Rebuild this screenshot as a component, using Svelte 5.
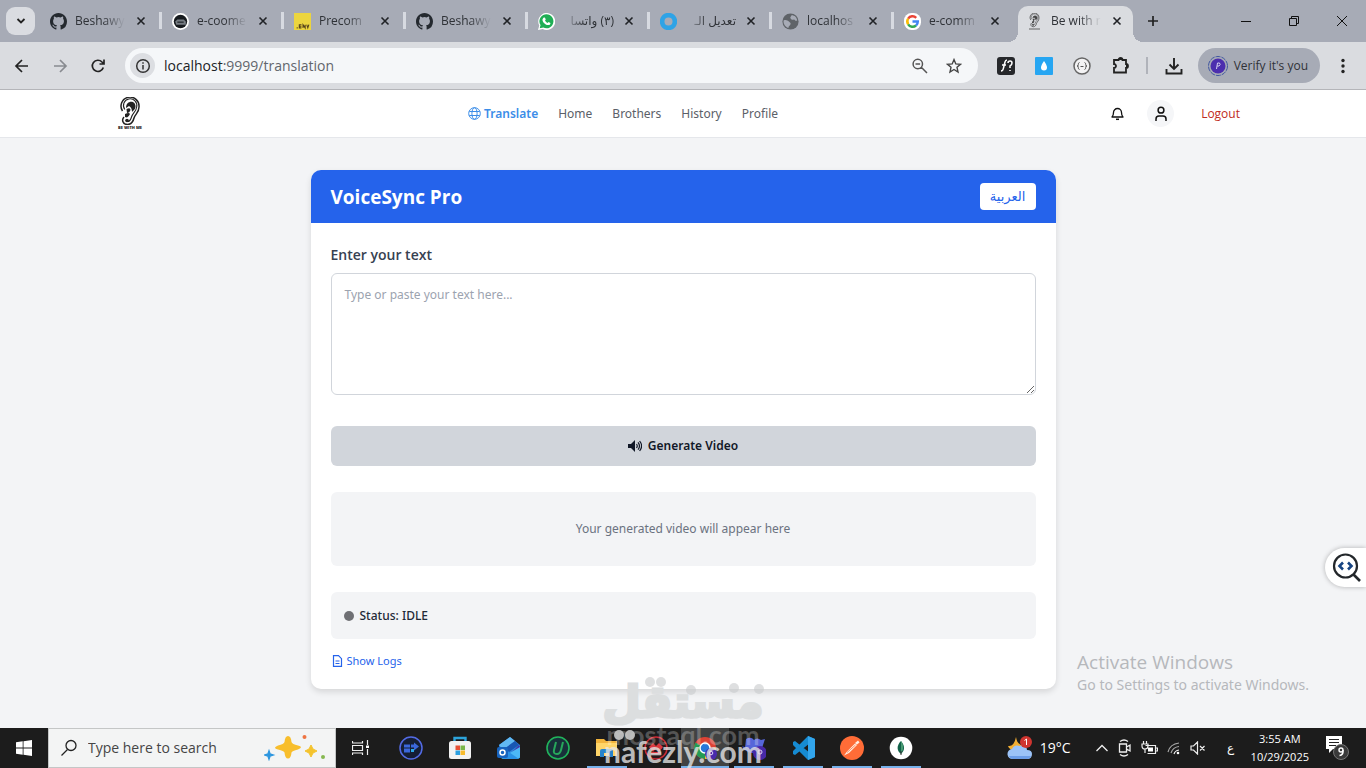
<script>
  const tabs = [
    { icon: 'github', title: 'Beshawy' },
    { icon: 'store', title: 'e-coome' },
    { icon: 'env', title: 'Precom' },
    { icon: 'github', title: 'Beshawy' },
    { icon: 'whatsapp', title: '(٣) واتسا', rtl: true },
    { icon: 'ring', title: 'تعديل الـ', rtl: true },
    { icon: 'globe', title: 'localhos' },
    { icon: 'google', title: 'e-comm' },
    { icon: 'ear', title: 'Be with r', active: true },
  ];
  const links = ['Home', 'Brothers', 'History', 'Profile'];
  const apps = [
    { name: 'devhome' }, { name: 'msstore' }, { name: 'outlook' }, { name: 'iobit' },
    { name: 'explorer', open: true }, { name: 'anydesk' }, { name: 'chrome', open: true, focused: true },
    { name: 'teams', open: true }, { name: 'vscode', open: true }, { name: 'postman', open: true },
    { name: 'mongo', open: true },
  ];
  let text = $state('');
</script>

{#snippet ear()}
  <path d="M2.500 14A9 9 0 1 1 19 10c0 6-4 7-5 11s-3 6.500-6.500 6.500c-5 0-6-5-3.500-7.500" fill="none" stroke="#222" stroke-width="1.500" />
  <path d="M4.800 12.500A6.700 6.700 0 1 1 16.700 10c-.5 4.500-4 6-5.200 10-.8 3-2.500 4.800-4.500 4.500" fill="none" stroke="#222" stroke-width="1.100" />
  <path d="M6 11c0-8 10-8 9.500-1-.5 3-3 4-3.500 5 0-3-1-5-3-6-1 1-2 1-3 2z" fill="#222" />
  <path d="M6.500 12q4-2 4 1-1 3-3.500 3zM5 17q4-2 5 0-1 2-3 3.500L5 20z" fill="#222" />
  <circle cx="7" cy="23.500" r="1.800" fill="#222" />
{/snippet}

{#snippet favicon(name)}
  {#if name === 'github'}
    <svg class="fav" viewBox="0 0 16 16"><path fill="#24292f" d="M8 0C3.58 0 0 3.58 0 8c0 3.54 2.29 6.53 5.47 7.59.4.07.55-.17.55-.38 0-.19-.01-.82-.01-1.49-2.01.37-2.53-.49-2.69-.94-.09-.23-.48-.94-.82-1.13-.28-.15-.68-.52-.01-.53.63-.01 1.08.58 1.23.82.72 1.21 1.87.87 2.33.66.07-.52.28-.87.51-1.07-1.78-.2-3.64-.89-3.64-3.95 0-.87.31-1.59.82-2.15-.08-.2-.36-1.02.08-2.12 0 0 .67-.21 2.2.82a7.6 7.6 0 0 1 4 0c1.53-1.04 2.2-.82 2.2-.82.44 1.1.16 1.92.08 2.12.51.56.82 1.27.82 2.15 0 3.07-1.87 3.75-3.65 3.95.29.25.54.73.54 1.48 0 1.07-.01 1.93-.01 2.2 0 .21.15.46.55.38A8.01 8.01 0 0 0 16 8c0-4.42-3.58-8-8-8z" /></svg>
  {:else if name === 'store'}
    <svg class="fav" viewBox="0 0 16 16"><circle cx="8" cy="8" r="8" fill="#fff" /><circle cx="8" cy="8" r="6.300" fill="#161a1e" /><path d="M3 8l2-2h6l2 2v3H4z" fill="#777d84" /><path d="M5 8.600h6" stroke="#161a1e" /></svg>
  {:else if name === 'env'}
    <svg class="fav" viewBox="0 0 16 16"><rect width="16" height="16" fill="#ecd53f" /><path d="M2.500 14h1M7 11H5v3h2M5 12.500h2M8.500 14v-3l2 3v-3M12 11l1 3 1-3" fill="none" stroke="#55421b" /></svg>
  {:else if name === 'whatsapp'}
    <svg class="fav" viewBox="0 0 16 16"><path d="M0 16l1.200-4.200A8 8 0 1 1 4.400 15z" fill="#fff" /><path d="M1.600 14.400l.8-3A6.600 6.600 0 1 1 5 13.700z" fill="#1fae55" /><path d="M5 4.500l1.500-.2.8 1.900-.7.9c.6 1.100 1.300 1.700 2.400 2.200l.9-.9 1.800.9c0 1.700-1.200 2.100-2.200 2C6.500 11 4 8 4.200 6z" fill="#fff" /></svg>
  {:else if name === 'ring'}
    <svg class="fav" viewBox="0 0 16 16"><circle cx="8" cy="8" r="6" fill="none" stroke="#2ea3e6" stroke-width="4.400" /></svg>
  {:else if name === 'globe'}
    <svg class="fav" viewBox="0 0 16 16"><circle cx="8" cy="8" r="7.600" fill="#5f6368" /><path d="M1.500 7c2-1 4 0 5 1 1 1 2 1 1.500 2.500S6 12 6 14C3 13 1 10 1.500 7zM9 2c3 0 5 2 5.300 5-2 1-2-1-3-1s-2 1-3-.5S8 4 9 2z" fill="#a7abb6" /></svg>
  {:else if name === 'google'}
    <svg class="fav" viewBox="0 0 16 16"><rect width="16" height="16" rx="7" fill="#fff" /><g fill="none" stroke-width="2.300"><path d="M3.900 5.300A5 5 0 0 1 11.500 4.500" stroke="#ea4335" /><path d="M3.900 10.700a5 5 0 0 1 0-5.400" stroke="#fbbc05" /><path d="M11.300 11.800a5 5 0 0 1-7.400-1.100" stroke="#34a853" /><path d="M8 8h5a5 5 0 0 1-1.700 3.800" stroke="#4285f4" /></g></svg>
  {:else}
    <svg class="fav" viewBox="-1 0 22 34" opacity=".8">{@render ear()}<path d="M-1 32h22" stroke="#444" stroke-width="2" /></svg>
  {/if}
{/snippet}

{#snippet appicon(name)}
  <svg width="24" height="24" viewBox="0 0 24 24">
    {#if name === 'devhome'}
      <circle cx="12" cy="12" r="11" fill="#151e35" stroke="#536be5" stroke-width="1.500" /><path d="M5 8.500h6v3H5zM12 8.500h3v-2l5 4-5 4v-3h-3zM5 12.500h6v4H5z" fill="#3b67dc" /><path d="M12 13h3v3h-3z" fill="#2aa8e8" />
    {:else if name === 'msstore'}
      <path d="M6.500 6V2h11v4" fill="none" stroke="#2ca4dc" stroke-width="2.400" /><rect x="1" y="5" width="22" height="18" rx="2.500" fill="#f2f2f2" /><path d="M7.500 9.500h4.500v4.500H7.500z" fill="#e75035" /><path d="M12.500 9.500H17v4.500h-4.500z" fill="#7ab648" /><path d="M7.500 14.500h4.500V19H7.500z" fill="#2a9fe0" /><path d="M12.500 14.500H17V19h-4.500z" fill="#f8bc2e" />
    {:else if name === 'outlook'}
      <path d="M2 9L13 1l10 8v13H4z" fill="#2f86dc" /><path d="M2 9l11-8 5 4-12 9z" fill="#61b9f3" /><path d="M7 13l11-8 4 4-10 7z" fill="#1857b3" /><path d="M22 9l1 2v8H12z" fill="#4338a8" /><path d="M4 22l19-11v9q0 3-3 3H6z" fill="#4cb8f6" /><path d="M9 14l13 9H6z" fill="#2a92e6" /><rect y="11" width="11" height="11" rx="2" fill="#1764bf" /><circle cx="5.500" cy="16.500" r="2.500" fill="none" stroke="#fff" stroke-width="1.500" />
    {:else if name === 'iobit'}
      <circle cx="12" cy="12" r="11" fill="#18303a" stroke="#21b45c" stroke-width="1.600" /><path d="M10 6L8 14q-1 4 3 4 3 0 4-4l2-8" fill="none" stroke="#27a75b" stroke-width="2" />
    {:else if name === 'explorer'}
      <path d="M1 3h8l2 2h11v15H1z" fill="#f2b43c" /><path d="M1 7h21v13H1z" fill="#ffd568" /><path d="M5 21v-6q0-2 2-2h9q2 0 2 2v6h-4v-4H9v4z" fill="#2683cb" />
    {:else if name === 'anydesk'}
      <circle cx="12" cy="12" r="11" fill="#29191b" stroke="#c92c35" stroke-width="1.500" /><path d="M5 11l4-4 4 4-4 5zM11 11l4-4 4 4-4 5z" fill="#da3941" /><path d="M7 17h10" stroke="#da3941" stroke-width="2" />
    {:else if name === 'chrome'}
      <circle cx="12" cy="12" r="11" fill="#dd4335" /><path d="M12 12L2.500 6.500A11 11 0 0 0 12 23z" fill="#239b55" /><path d="M12 12h11A11 11 0 0 1 12 23z" fill="#f4c431" /><circle cx="12" cy="12" r="5" fill="#2878da" stroke="#fff" stroke-width="1.500" /><circle cx="18" cy="18" r="6" fill="#4a2bac" /><circle cx="18" cy="17" r="1.800" fill="none" stroke="#dad3f5" />
    {:else if name === 'teams'}
      <path d="M4 3q5-3 8 1 3-3 7 0l4-1-2 6q-1 6-7 8-8 1-11-5z" fill="#5666d9" /><path d="M0 10q11 5 20 1l-4 6q-13 1-16-7z" fill="#303bb3" /><circle cx="18" cy="17" r="7" fill="#4829a6" /><circle cx="18" cy="16" r="2" fill="none" stroke="#dad3f5" />
    {:else if name === 'vscode'}
      <path d="M17 0l7 3v18l-7 3L2 9V6l2-1 15 12V7L4 19l-2-1v-3z" fill="#168bd2" /><path d="M17 0l7 3v18l-7 3z" fill="#32a5ec" />
    {:else if name === 'postman'}
      <circle cx="12" cy="12" r="12" fill="#ff6c37" /><path d="M4 19.500l3-4 8-8 2 1.500-8 8zM15 7l3-2.500 1.500 2L17 8.500z" fill="#fff0e4" /><path d="M7 16.500L15.500 9" stroke="#ff8a5e" />
    {:else}
      <circle cx="12" cy="12" r="11.300" fill="#fff" /><path d="M12 5c5 6 3 10 0 13-4-3-5-8 0-13z" fill="#116149" /><path d="M12 5c4 6 2 9 0 12z" fill="#499a72" /><path d="M12 15v4" stroke="#333" />
    {/if}
  </svg>
{/snippet}

<div class="screen">
  <div class="tabstrip">
    <button class="tabsearch" aria-label="Search tabs"><svg width="12" height="12" viewBox="0 0 12 12"><path d="M2.500 4L6 7.500 9.500 4" fill="none" stroke="#222" stroke-width="1.800" /></svg></button>
    <div class="tabs">
      {#each tabs as t}
        <div class="tab" class:active={t.active}>
          {@render favicon(t.icon)}
          <span class="title" class:rtl={t.rtl} dir={t.rtl ? 'rtl' : 'ltr'}>{t.title}</span>
          <button class="close" aria-label="Close tab"><svg width="10" height="10" viewBox="0 0 10 10"><path d="M1.500 1.500l7 7m0-7l-7 7" stroke="#202226" stroke-width="1.600" /></svg></button>
        </div>
      {/each}
    </div>
    <button class="new" aria-label="New tab"><svg width="12" height="12" viewBox="0 0 12 12"><path d="M6 1v10M1 6h10" stroke="#222" stroke-width="1.700" /></svg></button>
    <div class="wincontrols">
      <button aria-label="Minimize"><svg width="12" height="12"><path d="M1 6.500h10" stroke="#111" /></svg></button>
      <button aria-label="Restore"><svg width="12" height="12"><path d="M1.500 3.500h7v7h-7zM3.500 3v-1.500h7v7H9" fill="none" stroke="#111" /></svg></button>
      <button aria-label="Close"><svg width="12" height="12"><path d="M1 1l10 10M11 1L1 11" stroke="#111" /></svg></button>
    </div>
  </div>

  <div class="toolbar">
    <button aria-label="Back"><svg width="16" height="16" viewBox="0 0 16 16"><path d="M14 8H2.500M8 2L2 8l6 6" class="dark" /></svg></button>
    <button aria-label="Forward"><svg width="16" height="16" viewBox="0 0 16 16"><path d="M2 8h11.500M8 2l6 6-6 6" class="dim" /></svg></button>
    <button aria-label="Reload"><svg width="16" height="16" viewBox="0 0 16 16"><path d="M13.300 9.500A5.600 5.600 0 1 1 12 4l2 2M14 1.500V6H9.500" class="dark" /></svg></button>
    <div class="omnibox">
      <button class="info" aria-label="Site information"><svg width="16" height="16" viewBox="0 0 16 16"><circle cx="8" cy="8" r="6.300" fill="none" stroke="#333" stroke-width="1.500" /><path d="M8 7v4.500M8 4.200v1.600" stroke="#333" stroke-width="1.500" /></svg></button>
      <span class="url">localhost<i>:9999/translation</i></span>
      <button aria-label="Zoom"><svg width="16" height="16" viewBox="0 0 16 16"><path d="M10.500 6a4.700 4.700 0 1 1-9.400 0 4.700 4.700 0 0 1 9.400 0zM9.300 9.300L15 15M3.500 6h4.600" fill="none" stroke="#555" stroke-width="1.500" /></svg></button>
      <button aria-label="Bookmark"><svg width="16" height="16" viewBox="0 0 16 16"><path d="M8 1.600l1.800 4.300 4.700.4-3.500 3 1 4.700-4-2.500L4 14l1-4.700-3.500-3 4.700-.4z" fill="none" stroke="#444" stroke-width="1.400" /></svg></button>
    </div>
    <div class="extensions">
      <button aria-label="Font finder"><svg width="18" height="18" viewBox="0 0 18 18"><rect width="18" height="18" rx="3" fill="#26282b" /><path d="M4 14q2 0 2.500-3L8 5q.5-2 2-2M5 8h4M11 6q0-2 2-2t2 2-2 3v2m0 2v1" fill="none" stroke="#fff" stroke-width="1.500" /></svg></button>
      <button aria-label="Color drop"><svg width="18" height="18" viewBox="0 0 18 18"><rect width="18" height="18" rx="1" fill="#26a6f2" /><path d="M9 4q3 4 3 6.500a3 3 0 0 1-6 0Q6 8 9 4z" fill="#fff" /></svg></button>
      <button aria-label="JSON viewer"><svg width="18" height="18" viewBox="0 0 18 18"><circle cx="9" cy="9" r="8" fill="#f3f3f4" stroke="#666" stroke-width="1.500" /><path d="M6.500 5.500Q5 6 5.300 7.500T4 9q1.600 0 1.300 1.500t1.200 2M11.500 5.500Q13 6 12.700 7.500T14 9q-1.600 0-1.300 1.500t-1.200 2M7.500 9.500h3" fill="none" stroke="#555" /></svg></button>
      <button aria-label="Extensions"><svg width="20" height="20" viewBox="0 0 20 20"><path d="M3 4h4.500a2 2 0 0 1 4 0H15v4a2 2 0 0 1 0 4v4.500H3V12a2 2 0 0 0 0-4z" fill="none" stroke="#222" stroke-width="1.800" /><path d="M7.500 4a2 2 0 0 1 4 0zM15 8a2 2 0 0 1 0 4z" fill="#222" /></svg></button>
    </div>
    <span class="divider"></span>
    <button aria-label="Downloads"><svg width="18" height="18" viewBox="0 0 18 18"><path d="M9 1v11M4.500 7.500L9 12l4.500-4.500M1.500 12v4.500h15V12" fill="none" stroke="#222" stroke-width="1.900" /></svg></button>
    <button class="verify"><svg width="22" height="22" viewBox="0 0 22 22"><circle cx="11" cy="11" r="9.500" fill="none" stroke="#4056a0" stroke-dasharray="5 1" /><circle cx="11" cy="11" r="7.500" fill="#4c2eae" /><path d="M9.500 14l1-6h2q1.500 1.500-.5 3h-2" fill="none" stroke="#d4cef0" /></svg><span>Verify it's you</span></button>
    <button aria-label="Menu"><svg width="6" height="16" viewBox="0 0 6 16"><g fill="#222"><circle cx="3" cy="2.500" r="1.700" /><circle cx="3" cy="8" r="1.700" /><circle cx="3" cy="13.500" r="1.700" /></g></svg></button>
  </div>

  <header class="site">
    <a href="#home" class="logo" aria-label="Be with me"><svg width="20" height="28" viewBox="0 0 20 28">{@render ear()}</svg><span>BE WITH ME</span></a>
    <nav>
      <a href="#translate" class="current"><svg width="13" height="13" viewBox="0 0 13 13"><g fill="none" stroke="#3b8de8"><circle cx="6.500" cy="6.500" r="5.800" /><ellipse cx="6.500" cy="6.500" rx="2.600" ry="5.800" /><path d="M1.300 4.500h10.400M1.300 8.500h10.400" /></g></svg>Translate</a>
      {#each links as l}<a href="#{l}">{l}</a>{/each}
    </nav>
    <div class="account">
      <button class="round" aria-label="Notifications"><svg width="13" height="14" viewBox="0 0 13 14"><path d="M1 10q1.500-1.500 1.500-4.500a4 4 0 0 1 8 0Q10.500 8.500 12 10z" fill="none" stroke="#111" stroke-width="1.300" stroke-linejoin="round" /><path d="M5 12.300h3" stroke="#111" stroke-width="1.500" /></svg></button>
      <button class="round user" aria-label="Account"><svg width="14" height="16" viewBox="0 0 14 16"><circle cx="7" cy="4.200" r="2.900" fill="none" stroke="#111" stroke-width="1.500" /><path d="M2 15v-2q0-3 3-3h4q3 0 3 3v2" fill="none" stroke="#111" stroke-width="1.500" /></svg></button>
      <button class="logout">Logout</button>
    </div>
  </header>

  <main>
    <section class="card">
      <div class="cardhead"><h1>VoiceSync Pro</h1><button lang="ar">العربية</button></div>
      <div class="cardbody">
        <label for="source">Enter your text</label>
        <textarea id="source" placeholder="Type or paste your text here..." bind:value={text}></textarea>
        <button class="generate"><svg width="14" height="12" viewBox="0 0 14 12"><path d="M0 4h3l4-4v12L3 8H0z" fill="#111827" /><path d="M8.500 4q1.500 2 0 4M10 2.300q3 3.700 0 7.400M11.600 1q4 5 0 10" fill="none" stroke="#111827" stroke-width="1.200" /></svg>Generate Video</button>
        <div class="preview">Your generated video will appear here</div>
        <div class="status"><span class="dot"></span>Status: IDLE</div>
        <button class="logs"><svg width="11" height="12" viewBox="0 0 11 12"><path d="M1.500.7H6.500L9.500 3.700v7.600h-8zM3.500 6h4M3.500 8.500h4" fill="none" stroke="#2563eb" stroke-width="1.200" /></svg>Show Logs</button>
      </div>
    </section>
    <div class="activate"><strong>Activate Windows</strong><span>Go to Settings to activate Windows.</span></div>
    <button class="inspect" aria-label="Inspect code"><svg width="30" height="30" viewBox="0 0 30 30"><circle cx="13.500" cy="13" r="11.500" fill="none" stroke="#23272b" stroke-width="2.200" /><path d="M21.500 21.500l6.500 6.500" stroke="#23272b" stroke-width="2.600" /><path d="M11 9.500l-3.500 3.500 3.500 3.500M16 9.500l3.500 3.500-3.500 3.500" fill="none" stroke="#174482" stroke-width="2.600" /></svg></button>
  </main>

  <footer>
    <button class="start" aria-label="Start"><svg width="16" height="16" viewBox="0 0 16 16"><path d="M0 2.300L6.700 1.300v6.300H0zM7.500 1.200L16 0v7.600H7.500zM0 8.400h6.700v6.300L0 13.700zM7.500 8.400H16V16l-8.500-1.200z" fill="#fff" /></svg></button>
    <label class="search">
      <svg width="18" height="18" viewBox="0 0 18 18"><circle cx="11" cy="6.500" r="5" fill="none" stroke="#222" stroke-width="1.300" /><path d="M7.500 10.500L1.500 16.500" stroke="#222" stroke-width="1.300" /></svg>
      <input aria-label="Search" placeholder="Type here to search" />
      <svg width="62" height="26" viewBox="0 0 62 26"><path d="M24 1q3 0 3.500 6 .5 2 6.500 3.500t0 4q-6 1.500-6.500 3-.5 6-3.500 6t-3.500-6q-.5-1.500-6.500-3t0-4q6-1.500 6.500-3.500.5-6 3.500-6z" fill="#f8be2c" /><path d="M47 10l2 4 4 2-4 2-2 4-2-4-4-2 4-2z" fill="#f4c32e" stroke="#f4c32e" /><path d="M5 16l1 3 3 1-3 1-1 3-1-3-3-1 3-1z" fill="#2d96df" stroke="#2d96df" stroke-width="1.500" /><circle cx="40.500" cy="2" r="2" fill="#ee7442" /><circle cx="59" cy="22" r="2" fill="#86b750" /></svg>
    </label>
    <button class="taskview" aria-label="Task view"><svg width="17" height="16" viewBox="0 0 17 16"><path d="M.5 1v2h10V1M.5 15v-2h10v2M.5 5.500h10v5H.5zM15.500 0v5M15.500 9v6" fill="none" stroke="#eee" stroke-width="1.200" /><path d="M14 5.500h3v2.500h-3z" fill="#fff" /></svg></button>
    <div class="apps">
      {#each apps as a}<button class:open={a.open} class:focused={a.focused} aria-label={a.name}>{@render appicon(a.name)}</button>{/each}
    </div>
    <div class="tray">
      <svg width="26" height="24" viewBox="0 0 26 24"><path d="M9 1q1 8 8 9-2 5-8 5-7-1-8-5 6 1 8-9z" fill="#f2ae31" /><path d="M6 23a5 5 0 0 1-1-10q2-5 8-3 2-2 5 0 2 1 2 4 5 0 5 4 0 5-5 5z" fill="#9cc3f7" /><path d="M2 20h22q-1 3-4 3H6q-3 0-4-3z" fill="#6d9ee8" /><circle cx="19" cy="6" r="6" fill="#cf3530" /><path d="M17.500 4.500L19.500 3v6" fill="none" stroke="#fff" /></svg>
      <span class="temp">19°C</span>
      <svg class="up" width="14" height="10" viewBox="0 0 14 10"><path d="M1.500 8L7 2.500 12.500 8" fill="none" stroke="#eee" stroke-width="1.300" /></svg>
      <svg width="14" height="18" viewBox="0 0 14 18"><path d="M1.500 5h7v8h-7zM8.500 8L12 6v6l-3.500-2M2 2.500q4-3 8 0M2 15.500q4 3 8 0" fill="none" stroke="#eee" stroke-width="1.300" /></svg>
      <svg width="17" height="14" viewBox="0 0 17 14"><path d="M4.500 4.500h10v8h-8M15 7h1.500v3H15M1 3h6v2q0 3-3 3T1 5zM2.500 0v3M5.500 0v3M4 8v4" fill="none" stroke="#eee" stroke-width="1.200" /><path d="M7 6.500h5v4H7z" fill="#fff" /></svg>
      <svg width="14" height="14" viewBox="0 0 14 14"><g fill="none" stroke="#aaa" stroke-width="1.200"><path d="M1 11Q3 3 12 2" /><path d="M4 12q2-6 8-6.500" /><path d="M7 13q1-3.500 5-4" stroke="#eee" /></g><circle cx="11" cy="12" r="1.300" fill="#fff" /></svg>
      <svg width="16" height="14" viewBox="0 0 16 14"><path d="M1 5h2.500l4-4v12l-4-4H1zM10 5l4.500 4.500M14.500 5L10 9.500" fill="none" stroke="#eee" stroke-width="1.200" /></svg>
      <span class="lang">ع</span>
      <span class="clock">3:55 AM<br />10/29/2025</span>
      <svg class="note" width="26" height="26" viewBox="0 0 26 26"><path d="M1 1h16v13H8l-4 4v-4H1z" fill="#fff" /><path d="M4 4.500h10M4 7.500h10M4 10.500h7" stroke="#222" /><circle cx="16" cy="17" r="7.500" fill="#3a3a3a" stroke="#777" /><circle cx="16" cy="15" r="2" fill="none" stroke="#fff" stroke-width="1.400" /><path d="M18 15q.5 5-3.500 5.500" fill="none" stroke="#fff" stroke-width="1.400" /></svg>
    </div>
  </footer>

  <div class="watermark" aria-hidden="true">
    <svg width="166" height="92" viewBox="0 0 166 92"><g fill="#c9cbcd" opacity=".6"><circle cx="50" cy="6" r="5" /><circle cx="61" cy="6" r="5" /><circle cx="91" cy="14" r="5" /><circle cx="134" cy="12" r="5" /><circle cx="159" cy="13" r="5" /></g><g fill="#c9c9c9" opacity=".9"><circle cx="19" cy="59" r="5" /><circle cx="30" cy="59" r="5" /></g></svg>
    <b>مستقل</b><span>mostaql.com</span><em>nafezly.com</em>
  </div>
</div>

<style>
  :global(body) { margin: 0; }
  .screen { position: relative; min-height: 100vh; display: flex; flex-direction: column; overflow: hidden; background: #f3f4f6; color: #1f2937; font: 12px/18px "Noto Sans", "DejaVu Sans", sans-serif; }
  * { box-sizing: border-box; }
  button { border: 0; padding: 0; background: none; font: inherit; color: inherit; display: flex; align-items: center; justify-content: center; }
  a { text-decoration: none; color: inherit; }
  svg { flex: none; display: block; }
  .tabstrip, .toolbar, .tray { font-family: "Open Sans", "DejaVu Sans", sans-serif; }
  .tabstrip { height: 42px; background: #a7abb6; display: flex; align-items: center; padding-left: 6px; }
  .tabsearch { width: 29px; height: 28px; border-radius: 9px; background: #dadce1; }
  .tabs { display: flex; gap: 7px; margin-left: 7px; align-self: flex-end; }
  .tab { position: relative; width: 115px; height: 36px; padding: 0 9px 6px 8px; display: flex; align-items: center; gap: 8px; color: #2f3237; }
  .tab:not(:nth-last-child(-n+2))::after { content: ""; position: absolute; right: -5px; top: 6px; width: 3px; height: 17px; background: #d7dae1; }
  .fav { width: 17px; height: 17px; }
  .title { flex: 1; min-width: 0; overflow: hidden; white-space: nowrap; mask-image: linear-gradient(90deg, #000 55%, transparent 98%); }
  .title.rtl { mask-image: linear-gradient(270deg, #000 55%, transparent 98%); }
  .close { width: 14px; height: 14px; }
  .active { background: #dadce0; border-radius: 10px 10px 0 0; }
  .active::before { content: ""; position: absolute; left: -10px; right: -10px; bottom: 0; height: 10px; background: radial-gradient(circle at 0 0, transparent 10px, #dadce0 10px) left / 10px 10px no-repeat, radial-gradient(circle at 100% 0, transparent 10px, #dadce0 10px) right / 10px 10px no-repeat; }
  .new { width: 28px; height: 28px; margin-left: 6px; }
  .wincontrols { display: flex; margin-left: auto; }
  .wincontrols button { width: 48px; height: 40px; }
  .toolbar { height: 48px; display: flex; align-items: center; background: #dadce0; border-bottom: 1px solid #b4b5b9; padding: 0 20px 0 14px; gap: 22px; }
  .dark, .dim { fill: none; stroke: #222; stroke-width: 1.7; }
  .dim { stroke: #888b90; }
  .omnibox { flex: 1; height: 35px; border-radius: 18px; background: #f5f7f9; display: flex; align-items: center; gap: 18px; padding: 0 16px 0 5px; margin-left: -3px; }
  .info { width: 25px; height: 25px; border-radius: 50%; background: #dcdee2; }
  .url { flex: 1; font-size: 14px; line-height: 20px; margin-left: -9px; color: #202226; }
  .url i { font-style: normal; color: #62666d; }
  .extensions { display: flex; align-items: center; gap: 20px; margin-left: -3px; }
  .divider { width: 2px; height: 17px; background: #b0b3ba; margin: 0 -5px 0 -7px; }
  .verify { height: 35px; border-radius: 18px; background: #a7abb6; padding: 0 12px 0 9px; gap: 5px; color: #303238; margin: 0 -2px 0 -7px; }
  .site { height: 48px; background: #fff; border-bottom: 1px solid #e5e7eb; display: flex; align-items: center; justify-content: space-between; padding: 0 126px 0 118px; }
  .logo { display: flex; flex-direction: column; align-items: center; color: #222; }
  .logo span { font: 900 4px/5px "Open Sans", sans-serif; }
  nav { display: flex; gap: 20px; color: #5b6068; }
  nav a { display: flex; align-items: center; gap: 3px; }
  .current { color: #3b8de8; font-weight: 600; }
  .account { display: flex; align-items: center; gap: 16px; }
  .round { width: 27px; height: 27px; border-radius: 50%; }
  .user { background: #f5f6f8; }
  .logout { color: #bf2a20; margin-left: 11px; font-family: "Open Sans", sans-serif; font-weight: 500; }
  main { position: relative; flex: 1; padding: 32px 20px 39px; }
  .card { max-width: 745px; margin: 0 auto; border-radius: 10px; overflow: hidden; background: #fff; box-shadow: 0 3px 6px rgba(0, 0, 0, .12); }
  .cardhead { height: 53px; padding: 0 20px; display: flex; align-items: center; justify-content: space-between; background: #2563eb; color: #fff; }
  h1 { margin: 0; font: 700 19px/26px "Open Sans", sans-serif; }
  .cardhead button { width: 56px; height: 27px; border-radius: 4px; background: #fff; color: #2563eb; font: 13px/18px "DejaVu Sans", sans-serif; }
  .cardbody { padding: 22px 20px 19px; display: flex; flex-direction: column; }
  .cardbody label { font: 600 14px/20px "Open Sans", sans-serif; color: #374151; }
  textarea { display: block; height: 122px; margin: 8px 0 31px; border: 1px solid #d1d5db; border-radius: 6px; padding: 12px 13px; font: inherit; line-height: 18px; resize: vertical; outline: 0; }
  textarea::placeholder { color: #9ca3af; }
  .generate { height: 40px; gap: 6px; border-radius: 6px; background: #d1d5db; color: #111827; font-weight: 600; }
  .preview { margin-top: 26px; height: 74px; border-radius: 6px; background: #f3f4f6; color: #6b7280; display: flex; align-items: center; justify-content: center; }
  .status { margin-top: 26px; height: 47px; border-radius: 6px; background: #f3f4f6; display: flex; align-items: center; padding-left: 13px; gap: 6px; font-weight: 500; }
  .dot { width: 10px; height: 10px; border-radius: 50%; background: #6f7074; }
  .logs { align-self: flex-start; margin-top: 13px; padding-left: 1px; gap: 4px; color: #2563eb; font-size: 11px; line-height: 18px; }
  .activate { position: absolute; right: 57px; bottom: 33px; display: flex; flex-direction: column; color: #b6b8bc; font-size: 14px; line-height: 20px; }
  .activate strong { font: 400 19px/26px "Open Sans", sans-serif; }
  .inspect { position: absolute; right: 0; bottom: 141px; width: 41px; height: 39px; border-radius: 20px 0 0 20px; background: #fff; box-shadow: 0 0 5px rgba(0, 0, 0, .28); padding-left: 3px; }
  footer { height: 40px; background: #1c1c1c; display: flex; color: #fff; }
  .start { width: 48px; }
  .search { width: 288px; background: #f3f4f4; border: 1px solid #c4c6c6; display: flex; align-items: center; gap: 10px; padding: 0 9px 0 11px; }
  .search input { flex: 1; min-width: 0; border: 0; outline: 0; background: none; font: 14px/20px "Open Sans", sans-serif; padding: 0; }
  .search input::placeholder { color: #454545; opacity: 1; }
  .taskview { width: 48px; }
  .apps { display: flex; gap: 1px; margin-left: 3px; }
  .apps button { position: relative; width: 48px; }
  .apps .open::after { content: ""; position: absolute; left: 4px; right: 4px; bottom: 0; height: 2px; background: #76b0ea; }
  .apps .focused { background: #414242; }
  .apps .focused::after { left: 0; right: 0; }
  .tray { display: flex; align-items: center; gap: 9px; margin-left: auto; padding-right: 15px; }
  .temp { font-size: 14px; margin-left: -2px; }
  .up { margin-left: 15px; }
  .lang { width: 14px; text-align: center; margin: 0 4px 0 9px; }
  .clock { text-align: center; font-size: 11px; }
  .note { margin-left: 7px; }
  .watermark { position: absolute; left: 50%; bottom: 0; width: 166px; transform: translateX(-50%); height: 92px; display: flex; flex-direction: column; align-items: center; pointer-events: none; font-family: "DejaVu Sans", sans-serif; }
  .watermark svg { position: absolute; left: 0; top: 0; }
  .watermark b { font-size: 44px; line-height: 52px; color: #dcdedf; -webkit-text-stroke: 3px #dcdedf; }
  .watermark span { font: 700 27px/22px Lato, sans-serif; color: rgba(255, 255, 255, .25); margin-top: -4px; }
  .watermark em { font: normal 700 30px/22px Lato, sans-serif; color: rgba(230, 230, 230, .8); margin-top: -6px; }
</style>
